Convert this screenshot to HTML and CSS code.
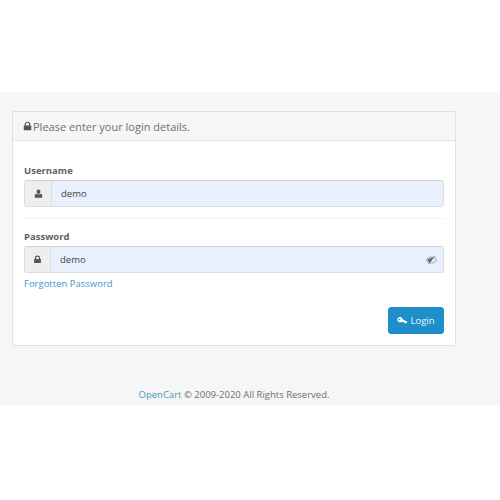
FILE: index.html
```html
<!DOCTYPE html>
<html>
<head>
	<meta charset="UTF-8">
	<title>Administration</title>
	<link rel="stylesheet" href="styles.css">
</head>
<body>
	<div class="page">
		<div class="panel">
			<div class="panel-heading">
				<svg class="icon-lock" viewBox="0 0 12 12"><path d="M1 5.2h1.300V3.600C2.300 1.600 3.900.4 6 .4s3.700 1.200 3.700 3.200v1.600H11v6.400H1zM3.900 5.200h4.200V3.700C8.100 2.500 7.200 1.800 6 1.800s-2.100.7-2.100 1.900z" fill-rule="evenodd"/></svg>
				<span>Please enter your login details.</span>
			</div>
			<form class="panel-body">
				<div class="form-group first">
					<label class="field-label">Username</label>
					<div class="input-group">
						<span class="addon">
							<svg class="icon-small" viewBox="0 0 12 12"><path d="M6 .8c1.500 0 2.500 1.200 2.500 2.800S7.500 6.500 6 6.500 3.500 5.200 3.500 3.600 4.500.8 6 .8zM3.300 6.200C4 6.900 5 7.200 6 7.200s2-.3 2.700-1c1.400.2 2.300 1.300 2.300 3.300v1.300c0 .5-.4.9-1 .9H2c-.6 0-1-.4-1-.9V9.500c0-2 .9-3.100 2.300-3.300z"/></svg>
						</span>
						<div class="input">demo</div>
					</div>
				</div>
				<div class="form-group">
					<label class="field-label">Password</label>
					<div class="input-group">
						<span class="addon narrow">
							<svg class="icon-small" viewBox="0 0 12 12"><path d="M1.500 5.300h1V3.800C2.500 1.900 4 .8 6 .8s3.500 1.100 3.500 3v1.500h1v5.500h-9zM4.100 5.300h3.800V3.900C7.900 2.800 7.100 2.200 6 2.200s-1.900.6-1.900 1.700z" fill-rule="evenodd"/></svg>
						</span>
						<div class="input">
							demo
							<svg class="icon-eye" viewBox="0 0 14 12"><path d="M7 2.200c2.900 0 5.300 1.500 6.500 3.800-1.200 2.300-3.600 3.800-6.500 3.800S1.700 8.300.5 6C1.700 3.700 4.100 2.200 7 2.200z" fill="none" stroke="#888" stroke-width="1"/><path d="M9.500 3 5 9.400 1.500 6C3 4.200 6 2.800 9.500 3z" fill="#666"/><path d="M3 11 11 1" stroke="#666" stroke-width="1"/></svg>
						</div>
					</div>
					<a class="link forgotten" href="#">Forgotten Password</a>
				</div>
				<div class="actions">
					<button class="btn-login" type="button">
						<svg class="icon-key" viewBox="0 0 14 12"><path d="M3.800 1a3.300 3.300 0 0 1 3.200 2.400l1.200 1.400 1.700.1.900 1.100 1.300.1 1 1.300-1.500 1.600-1.400-.2-1-1.200-2-.1-1-1A3.300 3.300 0 1 1 3.800 1zM3.100 2.900a1.100 1.100 0 1 0 0 2.200 1.100 1.100 0 0 0 0-2.200z" fill="#fff" fill-rule="evenodd"/></svg>
						Login
					</button>
				</div>
			</form>
		</div>
		<footer class="footer"><a class="link" href="#">OpenCart</a> © 2009-2020 All Rights Reserved.</footer>
	</div>
</body>
</html>
```

FILE: styles.css
```css
* {
	box-sizing: border-box;
}
body {
	margin: 0;
	background: #fff;
	font-family: "Open Sans", sans-serif;
	font-size: 10px;
	color: #666;
}
.page {
	margin-top: 92px;
	height: 314px;
	padding: 19px 44px 0 12px;
	background: #f6f6f6;
}
.panel {
	height: 235px;
	background: #fff;
	border: 1px solid #e0e0e0;
	border-radius: 2px;
}
.panel-heading {
	display: flex;
	align-items: center;
	gap: 1px;
	height: 29px;
	padding: 0 10px;
	background: #f6f6f6;
	border-bottom: 1px solid #e3e3e3;
	font-size: 11px;
	color: #6f6f6f;
}
.icon-lock {
	width: 9px;
	height: 10px;
	fill: #555;
}
.panel-body {
	padding: 22px 11px 0;
}
.form-group.first {
	padding-bottom: 11px;
	margin-bottom: 10px;
	border-bottom: 1px solid #f1f1f1;
}
.field-label {
	display: block;
	height: 17px;
	line-height: 15px;
	font-size: 9.500px;
	font-weight: 700;
	color: #5f5f5f;
}
.input-group {
	display: flex;
	height: 27px;
	border: 1px solid #ddd;
	border-top-color: #d0d0d0;
	border-radius: 3px;
}
.addon {
	display: flex;
	align-items: center;
	justify-content: center;
	width: 27px;
	background: #eee;
	border-right: 1px solid #ddd;
	border-radius: 3px 0 0 3px;
}
.addon.narrow {
	width: 26px;
}
.icon-small {
	width: 9px;
	height: 9px;
	fill: #555;
}
.input {
	flex: 1;
	display: flex;
	align-items: center;
	justify-content: space-between;
	padding: 0 6px 0 9px;
	background: #e8f0fe;
	color: #444;
	font-size: 9.500px;
}
.icon-eye {
	width: 11px;
	height: 10px;
}
.link {
	color: #4a94c4;
	text-decoration: none;
}
.forgotten {
	display: block;
	margin-top: 3px;
	line-height: 15px;
	font-size: 9.500px;
}
.actions {
	display: flex;
	justify-content: flex-end;
	margin-top: 16px;
}
.btn-login {
	display: flex;
	align-items: center;
	justify-content: center;
	gap: 2px;
	width: 56px;
	height: 27px;
	padding: 0;
	background: #1f8fcb;
	border: 1px solid #1f8ac4;
	border-radius: 3px;
	color: #eaf5fb;
	font-family: inherit;
	font-size: 9.500px;
}
.icon-key {
	width: 11px;
	height: 10px;
}
.footer {
	margin-top: 42px;
	text-align: center;
	font-size: 9.500px;
	line-height: 14px;
	color: #6f6f6f;
}
```
